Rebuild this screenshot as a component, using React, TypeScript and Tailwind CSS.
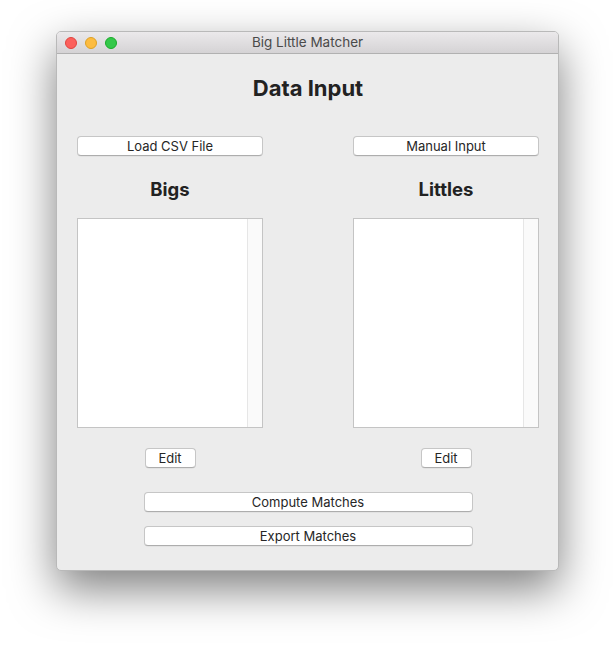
const font = { fontFamily: 'Inter, "Liberation Sans", sans-serif' };

function MacButton({ label, className = '' }: { label: string; className?: string }) {
  return (
    <button
      className={`h-[20px] rounded-[4px] border border-[#c6c6c6] border-b-[#adadad] bg-white text-[13px] leading-none text-[#262626] shadow-[0_0.5px_0.5px_rgba(0,0,0,0.08)] ${className}`}
    >
      {label}
    </button>
  );
}

function ListBox() {
  return (
    <div className="flex h-[210px] w-full border border-[#c4c4c4] bg-white">
      <div className="flex-1" />
      <div className="w-[15px] border-l border-[#e6e6e6] bg-[#fafafa]" />
    </div>
  );
}

function Column({ loadLabel, title }: { loadLabel: string; title: string }) {
  return (
    <div className="flex w-[186px] flex-col items-center">
      <MacButton label={loadLabel} className="w-full" />
      <h2 className="mt-[22px] h-[22px] text-[18.5px] font-bold leading-[22px] text-[#222]">{title}</h2>
      <div className="mt-[18px] w-full">
        <ListBox />
      </div>
      <MacButton label="Edit" className="mt-[20px] w-[51px]" />
    </div>
  );
}

export default function App() {
  return (
    <div className="min-h-[651px] bg-white pl-[56px] pt-[31px]" style={font}>
      <div className="flex h-[540px] w-[503px] flex-col overflow-hidden rounded-[5px] border border-[#b9b9b9] bg-[#ececec] shadow-[0_18px_45px_rgba(0,0,0,0.5)]">
        <div className="relative flex h-[22px] items-center justify-center border-b border-[#b1b1b1] bg-gradient-to-b from-[#ebe9eb] to-[#d5d3d5]">
          <div className="absolute left-[8px] top-[5px] flex gap-[8px]">
            <span className="h-[12px] w-[12px] rounded-full border border-[#e0443e] bg-[#fc605c]" />
            <span className="h-[12px] w-[12px] rounded-full border border-[#dea123] bg-[#fdbc40]" />
            <span className="h-[12px] w-[12px] rounded-full border border-[#1aab29] bg-[#34c84a]" />
          </div>
          <span className="text-[13.5px] text-[#4a4a4a]">Big Little Matcher</span>
        </div>

        <div className="flex flex-1 flex-col items-center pl-[20px] pr-[19px]">
          <h1 className="mt-[21px] h-[26px] text-[22px] font-bold leading-[26px] text-[#222]">Data Input</h1>

          <div className="mt-[35px] flex w-full justify-between">
            <Column loadLabel="Load CSV File" title="Bigs" />
            <Column loadLabel="Manual Input" title="Littles" />
          </div>

          <MacButton label="Compute Matches" className="mt-[24px] w-[329px]" />
          <MacButton label="Export Matches" className="mt-[14px] w-[329px]" />
        </div>
      </div>
    </div>
  );
}
